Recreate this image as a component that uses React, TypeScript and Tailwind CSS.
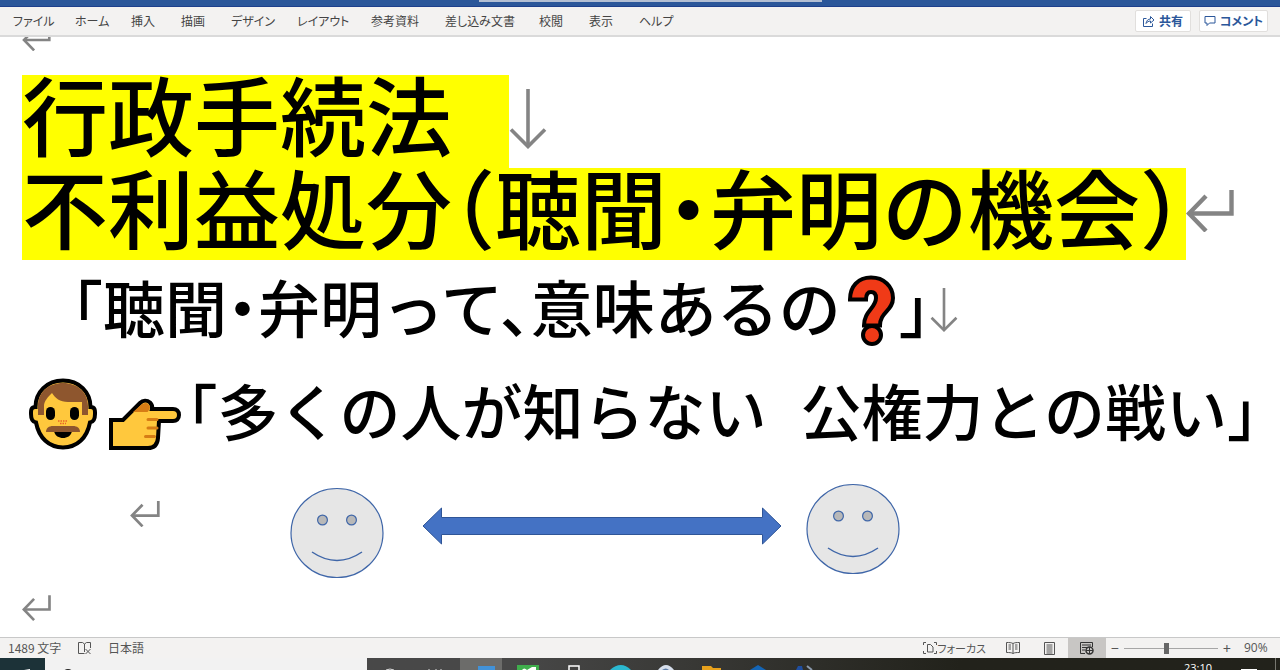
import React from 'react';

interface MarkProps {
  className?: string;
}

const tabs = [
  { label: 'ファイル', width: 'w-[62px]' },
  { label: 'ホーム', width: 'w-14' },
  { label: '挿入', width: 'w-[50px]' },
  { label: '描画', width: 'w-[50px]' },
  { label: 'デザイン', width: 'w-[66px]' },
  { label: 'レイアウト', width: 'w-[74px]' },
  { label: '参考資料', width: 'w-[74px]' },
  { label: '差し込み文書', width: 'w-[94px]' },
  { label: '校閲', width: 'w-[50px]' },
  { label: '表示', width: 'w-[50px]' },
  { label: 'ヘルプ', width: 'w-14' },
];

// Paragraph mark
function ReturnMark({ className }: MarkProps) {
  return (
    <svg className={`shrink-0 ${className}`} viewBox="0 0 48 42" fill="none" stroke="#848484" strokeWidth="4.400">
      <path d="M45.500 0V23.500H3" />
      <path d="M20 6 3 23.500 20 41" />
    </svg>
  );
}

// Line break mark
function BreakMark({ className }: MarkProps) {
  return (
    <svg className={`shrink-0 ${className}`} viewBox="0 0 38 60" fill="none" stroke="#848484" strokeWidth="3.600">
      <path d="M19 0v57" />
      <path d="M2 40.500 19 57.500 36 40.500" />
    </svg>
  );
}

function Face({ className }: MarkProps) {
  return (
    <svg className={`h-[92px] w-[94px] shrink-0 ${className}`} viewBox="0 0 94 92" fill="none" stroke="#3f66a8" strokeWidth="1.200">
      <ellipse cx="47" cy="46" rx="46" ry="44.500" fill="#e6e6e6" />
      <circle cx="32.500" cy="33" r="4.900" fill="#b8b8b8" />
      <circle cx="61.500" cy="33" r="4.900" fill="#b8b8b8" />
      <path d="M22 65q25 17 50 0" strokeWidth="1.500" />
    </svg>
  );
}

function DoubleArrow() {
  return (
    <svg className="mt-[38px] ml-[38px] h-[38px] w-[360px] shrink-0" viewBox="0 0 360 38">
      <path d="M1 19 19.500 1v9.500h321V1L359 19l-18.500 18v-9.500h-321V37Z" fill="#4472c4" stroke="#2f5597" />
    </svg>
  );
}

function QuestionEmoji() {
  return (
    <svg className="ml-1 h-[72px] w-[54px] shrink-0" viewBox="0 0 54 72" fill="none">
      <path d="M5 25.500C5 12.500 13 3.500 26 3.500S48 12.500 48 24C48 37 35 38 35 51.500H19C19 37 31 34 31 24C31 20 29 18 26 18S21 20 21 25.500Z" fill="#f03a17" stroke="#000" strokeWidth="4" />
      <circle cx="27" cy="61" r="9" fill="#f03a17" stroke="#000" strokeWidth="4" />
    </svg>
  );
}

function ManEmoji() {
  return (
    <svg className="h-[72px] w-[68px] shrink-0" viewBox="0 0 68 72">
      <path
        d="M34 2.500C18 2.500 6.500 14 6.500 29C1.500 29 2 33 2 36C2 41 3.500 44 7 44.500C10 60 20 69.500 34 69.500S58 60 61 44.500C64.500 44 66 41 66 36C66 33 66.500 29 61.500 29C61.500 14 50 2.500 34 2.500Z"
        fill="#ffc83d"
        stroke="#000"
        strokeWidth="4"
      />
      <path d="M9 37V28C9 14 20 5 34 5S59 14 59 28V37H53V24H39C31 24 26 20 23 15C19 19 15 23 15 28V37Z" fill="#8e562e" />
      <rect x="17" y="29" width="9" height="13" rx="4.500" fill="#000" />
      <rect x="41" y="29" width="9" height="13" rx="4.500" fill="#000" />
      <path d="M29 43h10M31 45.500h6" stroke="#e8622a" strokeWidth="1.500" strokeDasharray="1.500 1" />
      <path d="M25 53h18c-1 5-5 7-9 7s-8-2-9-7Z" fill="#000" />
      <path d="M17 54c0-4 3-6 7-6h20c4 0 7 2 7 6Z" fill="#8e562e" />
    </svg>
  );
}

function HandEmoji() {
  return (
    <svg className="h-[52px] w-[72px] shrink-0" viewBox="0 0 72 52">
      <path
        d="M2 22H14L31 5C34 2 38 2 41 4.500C43.500 7 43.500 9 43 11H64C67.500 11 70 13 70 17S67.500 23 64 23H50L49 40C48.500 46 46 50 39 50H2Z"
        fill="#ffc83d"
        stroke="#000"
        strokeWidth="4"
      />
      <path d="M24 14 32.500 6.500C35 4.500 38 4.500 39.500 6.500C42 9 41 11 38.500 14Z" fill="#d67d15" />
      <path d="M39 21.500h9M39 30h9M36.500 38.500h9" stroke="#d67d15" strokeWidth="3" strokeLinecap="round" />
    </svg>
  );
}

function Ribbon() {
  return (
    <header className="shrink-0">
      <div className="flex h-[7px] justify-center border-b border-[#1d3f8c] bg-[#2b579a]">
        <div className="ml-5 h-0.5 w-[343px] bg-[#b3bfd3]" />
      </div>
      <div className="flex h-[30px] items-center justify-between border-b-2 border-[#dadada] bg-[#f3f2f1] pr-3 pl-[13px]">
        <nav className="flex text-[12px] leading-4 text-[#444]">
          {tabs.map((tab) => (
            <button key={tab.label} type="button" className={`text-left whitespace-nowrap ${tab.width}`}>
              {tab.label}
            </button>
          ))}
        </nav>
        <div className="flex gap-2 text-[12px] font-bold text-[#2b579a]">
          <button type="button" className="flex h-[22px] w-14 items-center justify-center gap-1 rounded-xs border border-[#e1dfdd] bg-white">
            <svg className="h-3 w-3" viewBox="0 0 12 12" fill="none" stroke="currentColor">
              <path d="M3.500 3.500h-3v8h9v-3M3 8.500c.5-3 2-4.500 4.500-4.500V1.500L11 5 7.500 8V6C5.500 6 4 7 3 8.500Z" />
            </svg>
            共有
          </button>
          <button type="button" className="flex h-[22px] w-[69px] items-center justify-center gap-1 rounded-xs border border-[#e1dfdd] bg-white">
            <svg className="h-3 w-3 shrink-0" viewBox="0 0 12 12" fill="none" stroke="currentColor">
              <path d="M1 1.500h10v6.500H5.500L3 10.500V8H1Z" />
            </svg>
            コメント
          </button>
        </div>
      </div>
    </header>
  );
}

function Document() {
  return (
    <main className="min-h-0 flex-1 overflow-hidden bg-white font-medium whitespace-nowrap text-black [font-feature-settings:'halt']">
      <div className="flex h-[38px] items-start pl-[22px]">
        <div className="flex h-[14px] items-end overflow-hidden">
          <ReturnMark className="h-[25px] w-[29px]" />
        </div>
      </div>

      <h1 className="pl-[22px] text-[86px] leading-[75px]">
        <span className="flex items-start">
          <span className="flex bg-[#ffff00] pb-[18px]">
            行政手続法<span className="w-[57px] overflow-hidden">　</span>
          </span>
          <BreakMark className="mt-[14px] h-[60px] w-[38px]" />
        </span>
        <span className="flex items-start">
          <span className="bg-[#ffff00] pr-[3px] pb-[17px]">不利益処分（聴聞・弁明の機会）</span>
          <ReturnMark className="mt-[22px] h-[42px] w-12" />
        </span>
      </h1>

      <p className="flex h-[99px] items-center pl-[72px] text-[62px] leading-[62px]">
        <span className="pb-2">「聴聞・弁明って、意味あるの</span>
        <QuestionEmoji />
        <span className="pb-2">」</span>
        <BreakMark className="h-11 w-7" />
      </p>

      <p className="flex h-[110px] items-center pl-[29px] text-[61px] leading-[62px]">
        <ManEmoji />
        <span className="mr-1.5 ml-3 pt-5">
          <HandEmoji />
        </span>
        <span className="pb-2">「多くの人が知らない</span>
        <span className="w-[34px] overflow-hidden">　</span>
        <span className="pb-2">公権力との戦い」</span>
      </p>

      <div className="flex h-[126px] items-start pl-[130px]">
        <ReturnMark className="mt-8 h-[26px] w-[30px]" />
        <Face className="mt-[18px] ml-[130px]" />
        <DoubleArrow />
        <Face className="mt-[14px] ml-6" />
      </div>

      <div className="pl-[22px]">
        <ReturnMark className="h-[26px] w-[29px]" />
      </div>
    </main>
  );
}

function StatusBar() {
  return (
    <footer className="flex h-[21px] shrink-0 items-center justify-between border-t border-[#c8c8c8] bg-[#f3f2f1] pl-2 text-[12px] leading-4 text-[#555]">
      <div className="flex items-center">
        <span className="w-[70px]">1489 文字</span>
        <button type="button" aria-label="文章校正" className="w-[30px]">
          <svg className="h-3 w-[14px]" viewBox="0 0 14 12" fill="none" stroke="currentColor">
            <path d="M6.500 11.500H.5V.5h4l2 1.500v8M6.500 2l2-1.500h4V6M7.500 7l5 5M12.500 7l-5 5" />
          </svg>
        </button>
        <span>日本語</span>
      </div>

      <div className="flex h-full items-center">
        <button type="button" className="mr-5 flex items-center text-[11px]">
          <svg className="h-3 w-[14px]" viewBox="0 0 14 12" fill="none" stroke="currentColor">
            <path d="M3 .5H.5V3M11 .5h2.500V3M.5 9v2.500H3M13.500 9v2.500H11M4.500 2.500h3l2.500 2.500v5H4.500Z" />
          </svg>
          フォーカス
        </button>
        <button type="button" aria-label="閲覧モード" className="mr-6">
          <svg className="h-3 w-[14px]" viewBox="0 0 14 12" fill="none" stroke="currentColor">
            <path d="M7 1.500C5.500.5 3 .5.500.5v10c2.500 0 5 0 6.500 1 1.500-1 4-1 6.500-1V.5c-2.500 0-5 0-6.500 1v10M2.500 3H5M2.500 5H5M2.500 7H5M9 3h2.500M9 5h2.500M9 7h2.500" />
          </svg>
        </button>
        <button type="button" aria-label="印刷レイアウト" className="mr-[13px]">
          <svg className="h-[13px] w-[11px]" viewBox="0 0 11 13" fill="none" stroke="currentColor">
            <path d="M.5.500h10v12H.5ZM2.500 3h6M2.500 5h6M2.500 7h6M2.500 9h6M2.500 11h6" />
          </svg>
        </button>
        <button type="button" aria-label="Web レイアウト" className="flex h-full w-[38px] items-center justify-center bg-[#c8c6c4] text-[#333]">
          <svg className="h-[13px] w-[14px]" viewBox="0 0 14 13" fill="none" stroke="currentColor">
            <path d="M5 11.500H.5v-11h12V5M2 3h9M2 5.500h5M2 8h3" />
            <circle cx="9.500" cy="8.500" r="3.500" strokeWidth="1.500" />
            <path d="M6 8.500h7M9.500 5v7" />
          </svg>
        </button>
        <button type="button" aria-label="縮小" className="ml-1 w-[10px] text-center text-[14px]">−</button>
        <input
          type="range"
          aria-label="ズーム"
          min={0}
          max={100}
          defaultValue={45}
          className="mx-1 h-3 w-[94px] appearance-none bg-transparent [&::-webkit-slider-runnable-track]:h-px [&::-webkit-slider-runnable-track]:bg-[#a6a6a6] [&::-webkit-slider-thumb]:-mt-[5px] [&::-webkit-slider-thumb]:h-[11px] [&::-webkit-slider-thumb]:w-[5px] [&::-webkit-slider-thumb]:appearance-none [&::-webkit-slider-thumb]:bg-[#666]"
        />
        <button type="button" aria-label="拡大" className="w-[10px] text-center text-[14px]">+</button>
        <span className="ml-3 w-9 font-['Open_Sans',sans-serif]">90%</span>
      </div>
    </footer>
  );
}

function Taskbar() {
  return (
    <div className="flex h-3 shrink-0 items-start overflow-hidden bg-linear-to-r from-[#484848] from-40% to-[#22221b] to-75%">
      <div className="h-10 w-[45px] shrink-0 bg-[#1c3238]">
        <svg className="ml-6 h-3 w-3" viewBox="0 0 12 12">
          <path d="M0 12l6-1V12Z" fill="#fff" />
        </svg>
      </div>
      <div className="h-10 w-[322px] shrink-0 bg-[#f2f2f2] pt-[11px] pl-[17px]">
        <div className="h-3 w-3 rounded-full border-2 border-[#222]" />
      </div>
      <svg className="h-3 w-[93px] shrink-0" viewBox="0 0 93 12" fill="none" stroke="#ddd">
        <path d="M19 12q4-2 8 0M62 12v-1M69 12v-1M74 12v-1" />
      </svg>
      <div className="flex h-10 w-[42px] shrink-0 justify-end bg-[#6c6c6a] pt-2 pr-[7px]">
        <div className="h-6 w-[17px] bg-[#4292d8]" />
      </div>
      <svg className="ml-[15px] h-3 w-[310px] shrink-0" viewBox="0 0 310 12" fill="none">
        <path d="M0 7h22v5H0Z" fill="#3fae4c" />
        <path d="M5 12q2-3 5 0l5-3h4v3" fill="#fff" />
        <path d="M52 12V8h10v4" stroke="#fff" strokeWidth="1.500" />
        <path d="M93 12q11-10 21 0Z" fill="#2bb8d0" />
        <path d="M141 12q8-10 16 0Z" fill="#d7dfec" />
        <path d="M145 12q4-3 7 0Z" fill="#5d7da8" />
        <path d="M185 8h9l2 2h8v2h-19Z" fill="#e7a11c" />
        <path d="M233 12l8-5 8 5Z" fill="#1465b5" />
        <path d="M279 12l2-4h4l1 4Z" fill="#1f4e9f" />
        <path d="M290 8l5 4" stroke="#8b9aad" strokeWidth="2" />
      </svg>
      <div className="flex-1" />
      <time className="mt-1 w-[57px] shrink-0 font-['Open_Sans',sans-serif] text-[11px] leading-3 text-white">23:10</time>
      <div className="mt-[11px] mr-[18px] h-4 w-4 shrink-0 border border-white" />
      <div className="mr-1 h-10 w-px shrink-0 bg-[#77776f]" />
    </div>
  );
}

export default function App() {
  return (
    <div
      lang="ja"
      className="flex h-screen flex-col overflow-hidden font-['Noto_Sans_CJK_JP',sans-serif] [font-feature-settings:'palt']"
    >
      <Ribbon />
      <Document />
      <StatusBar />
      <Taskbar />
    </div>
  );
}
